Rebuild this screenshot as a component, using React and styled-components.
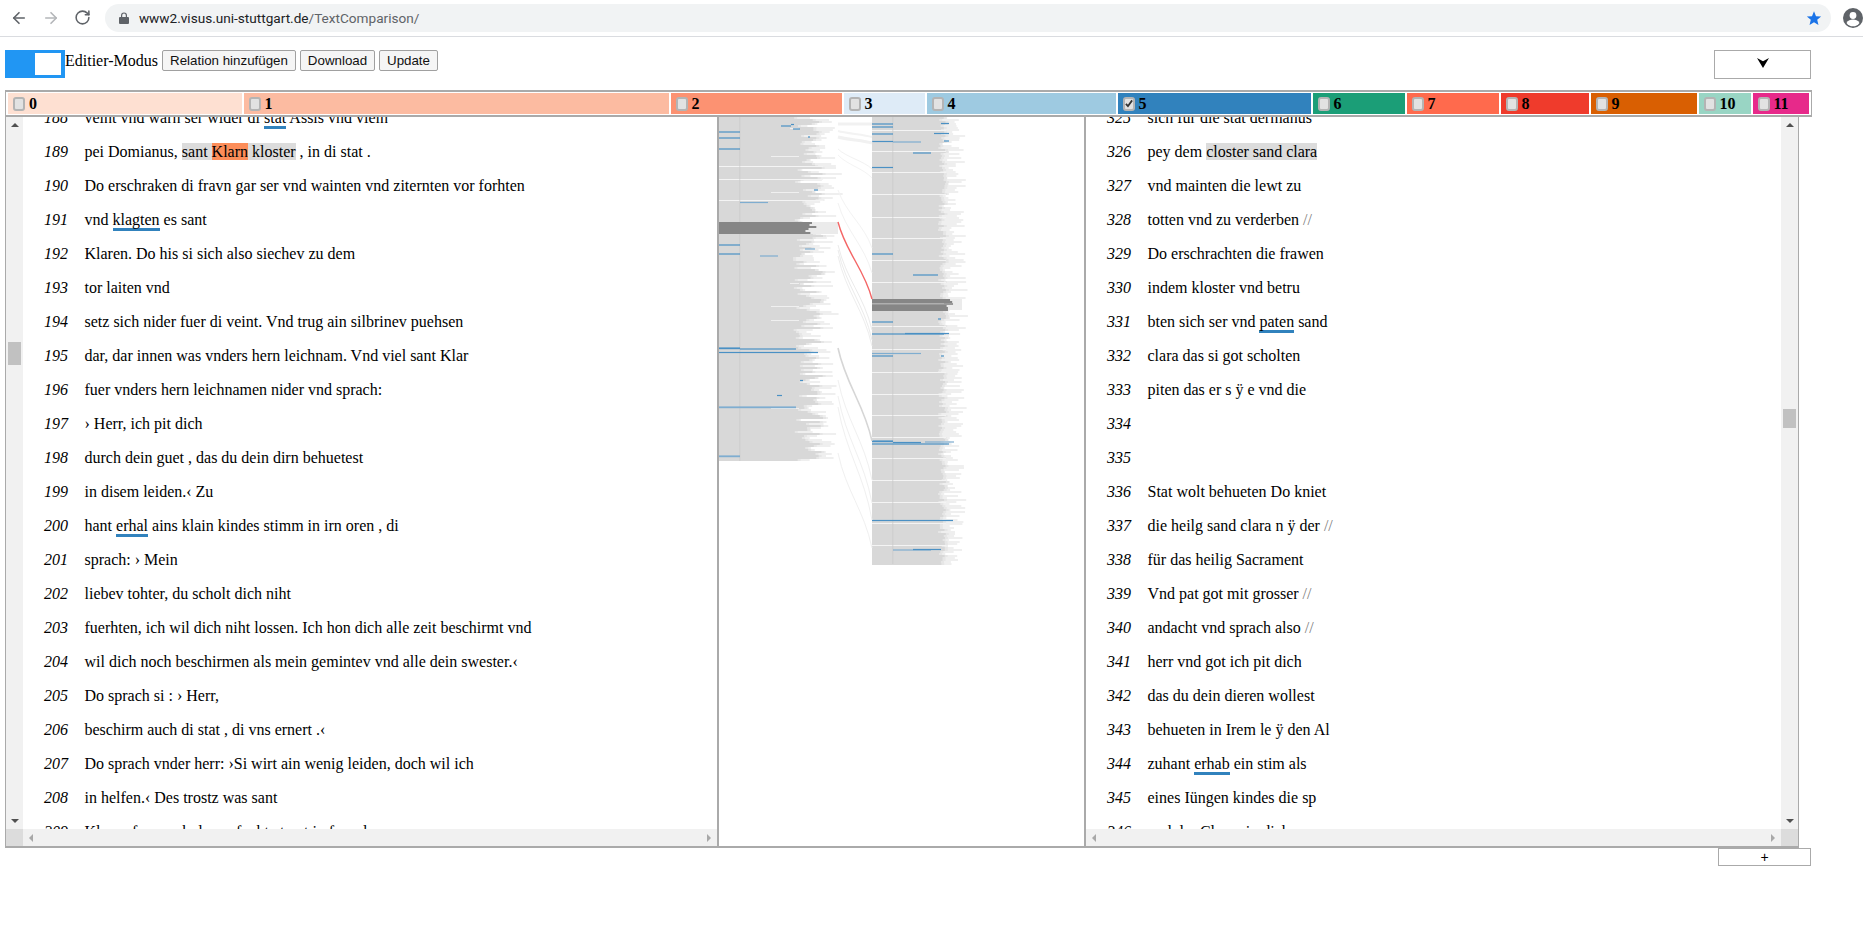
import React from "react";
import styled, { createGlobalStyle } from "styled-components";
import { ArrowLeft, ArrowRight, RotateCw } from "lucide-react";

const GlobalStyle = createGlobalStyle`
    html, body {
        margin: 0;
        padding: 0;
        background: #fff;
        overflow: hidden;
        font-family: "Liberation Serif", "Times New Roman", serif;
        font-size: 16px;
        color: #000;
    }
    * {
        box-sizing: border-box;
    }
`;

const Page = styled.div`
    width: 1863px;
    height: 928px;
    overflow: hidden;
`;

/* browser chrome */
const BrowserBar = styled.div`
    height: 37px;
    display: flex;
    align-items: center;
    border-bottom: 1px solid #dadce0;
    padding-left: 10px;
    padding-bottom: 1px;
`;

const NavIcon = styled.span`
    display: flex;
    width: 18px;
    height: 18px;
    margin-right: 14px;
    color: ${props => props.$dim ? "#b4b6b9" : "#5f6368"};
`;

const AddressBar = styled.div`
    margin-left: -1px;
    width: 1736px;
    height: 28px;
    border-radius: 14px;
    background: #f1f3f4;
    display: flex;
    align-items: center;
    padding-left: 14px;
    padding-right: 9px;
`;

const Url = styled.span`
    margin-left: 10px;
    font-family: Roboto, "Liberation Sans", sans-serif;
    font-size: 13.6px;
    color: #5f6368;
    flex: 1;
    b {
        font-weight: 400;
        color: #202124;
    }
`;

const Avatar = styled.svg`
    margin-left: 12px;
    flex: none;
`;

/* toolbar */
const Toolbar = styled.div`
    height: 53px;
    padding: 13px 52px 0 5px;
    display: flex;
    align-items: flex-start;
`;

const Toggle = styled.div`
    width: 60px;
    height: 28px;
    background: #2196f3;
    display: flex;
    justify-content: flex-end;
    padding: 3px 4px;
`;

const Knob = styled.div`
    width: 26px;
    height: 22px;
    background: #fff;
`;

const ModeLabel = styled.span`
    line-height: 21px;
    margin-right: 4px;
`;

const ToolButton = styled.button`
    height: 21px;
    width: ${props => props.$w}px;
    margin-right: 4px;
    padding: 0;
    background: #f5f5f5;
    border: 1px solid #a0a0a0;
    border-radius: 2px;
    font-family: "Liberation Sans", Arial, sans-serif;
    font-size: 13.33px;
    color: #111;
`;

const SelectBox = styled.div`
    margin-left: auto;
    width: 97px;
    height: 29px;
    border: 1px solid #aaa;
    display: flex;
    align-items: center;
    justify-content: center;
    padding-bottom: 3px;
`;

/* color tabs */
const TabBar = styled.div`
    margin-left: 5px;
    width: 1807px;
    height: 27px;
    border: 1px solid #aaa;
    border-top-width: 2px;
    border-bottom-width: 2px;
    padding: 1px 2px 0;
    display: flex;
    gap: 2px;
`;

const Tab = styled.div`
    flex: none;
    width: ${props => props.$w}px;
    height: 21px;
    background: ${props => props.$color};
    display: flex;
    align-items: center;
    padding-left: 5px;
    font-weight: 700;
    line-height: 21px;
`;

const Check = styled.span`
    flex: none;
    width: 12px;
    height: 14px;
    margin-right: 4px;
    background: #e2e2e2;
    border: 2px solid #b4b4b4;
    border-radius: 3px;
    display: flex;
    align-items: center;
    justify-content: center;
`;

/* main panes */
const Main = styled.div`
    margin-left: 5px;
    width: 1794px;
    height: 731px;
    border: 1px solid #aaa;
    border-top: 0;
    border-bottom-width: 2px;
    display: grid;
    grid-template-columns: 713px 365px 714px;
`;

const Pane = styled.div`
    height: 729px;
    display: grid;
    grid-template-columns: ${props => props.$side === "left" ? "17px 1fr" : "1fr 17px"};
    grid-template-rows: 712px 17px;
    border-${props => props.$side === "left" ? "right" : "left"}: 2px solid #aaa;
`;

const TextClip = styled.div`
    overflow: hidden;
    grid-row: 1;
    grid-column: ${props => props.$side === "left" ? 2 : 1};
`;

const Lines = styled.div`
    margin-top: -16px;
    padding-left: 21px;
`;

const Row = styled.div`
    height: 34px;
    line-height: 34px;
    display: flex;
    white-space: pre;
`;

const LineNo = styled.i`
    flex: none;
    width: 40.5px;
`;

const Mark = styled.span`
    background: ${props => props.$bg};
`;

const Under = styled.span`
    border-bottom: 3px solid #3182bd;
`;

const Slashes = styled.span`
    color: #808080;
`;

const VBar = styled.div`
    grid-row: 1;
    grid-column: ${props => props.$side === "left" ? 1 : 2};
    background: #f1f1f1;
    display: flex;
    flex-direction: column;
    align-items: center;
    padding: 6px 0;
`;

const Thumb = styled.div`
    width: 13px;
    height: ${props => props.$h}px;
    background: #c1c1c1;
    margin-top: ${props => props.$top}px;
    margin-bottom: auto;
`;

const Arrow = styled.span`
    width: 0;
    height: 0;
    border-left: 4px solid transparent;
    border-right: 4px solid transparent;
    border-${props => props.$dir === "up" ? "bottom" : "top"}: 4px solid #505050;
`;

const HBar = styled.div`
    grid-row: 2;
    grid-column: 1 / 3;
    background: #f1f1f1;
    display: flex;
    align-items: center;
    flex-direction: ${props => props.$side === "left" ? "row" : "row-reverse"};
`;

const Corner = styled.div`
    width: 17px;
    height: 17px;
    flex: none;
    background: #dcdcdc;
`;

const HArrows = styled.div`
    flex: 1;
    display: flex;
    justify-content: space-between;
    padding: 0 6px;
`;

const HArrow = styled.span`
    width: 0;
    height: 0;
    border-top: 4px solid transparent;
    border-bottom: 4px solid transparent;
    border-${props => props.$dir === "left" ? "right" : "left"}: 4px solid #a8a8a8;
`;

const Middle = styled.div`
    height: 729px;
    overflow: hidden;
`;

const Footer = styled.div`
    display: flex;
    justify-content: flex-end;
    padding-right: 52px;
`;

const AddButton = styled.div`
    width: 93px;
    height: 18px;
    border: 1px solid #aaa;
    text-align: center;
    line-height: 16px;
    font-family: "Liberation Sans", Arial, sans-serif;
    font-size: 14px;
`;

const tabs = [
    ["0", 233.5, "#fee0d2"], ["1", 425, "#fcbba1"], ["2", 171, "#fc9272"], ["3", 81, "#deebf7"],
    ["4", 189, "#9ecae1"], ["5", 193, "#3182bd", true], ["6", 92, "#1b9e77"], ["7", 92, "#ff6a4d"],
    ["8", 88, "#ef3b2c"], ["9", 106, "#d95f02"], ["10", 52, "#99d5c4"], ["11", 56, "#e7298a"],
];

const G = t => ({ t, k: "grey" });
const O = t => ({ t, k: "orange" });
const U = t => ({ t, k: "under" });
const S = { t: "//", k: "slash" };

const leftLines = [
    ["veint vnd warn ser wider di ", U("stat"), " Assis vnd vieln"],
    ["pei Domianus, ", G("sant "), O("Klarn"), G(" kloster"), " , in di stat ."],
    ["Do erschraken di fravn gar ser vnd wainten vnd ziternten vor forhten"],
    ["vnd ", U("klagten"), " es sant"],
    ["Klaren. Do his si sich also siechev zu dem"],
    ["tor laiten vnd"],
    ["setz sich nider fuer di veint. Vnd trug ain silbrinev puehsen"],
    ["dar, dar innen was vnders hern leichnam. Vnd viel sant Klar"],
    ["fuer vnders hern leichnamen nider vnd sprach:"],
    ["› Herr, ich pit dich"],
    ["durch dein guet , das du dein dirn behuetest"],
    ["in disem leiden.‹ Zu"],
    ["hant ", U("erhal"), " ains klain kindes stimm in irn oren , di"],
    ["sprach: › Mein"],
    ["liebev tohter, du scholt dich niht"],
    ["fuerhten, ich wil dich niht lossen. Ich hon dich alle zeit beschirmt vnd"],
    ["wil dich noch beschirmen als mein gemintev vnd alle dein swester.‹"],
    ["Do sprach si : › Herr,"],
    ["beschirm auch di stat , di vns ernert .‹"],
    ["Do sprach vnder herr: ›Si wirt ain wenig leiden, doch wil ich"],
    ["in helfen.‹ Des trostz was sant"],
    ["Klaren fuer sach das er fuchte trost in fremder"],
];

const rightLines = [
    ["sich für die stat dermanus"],
    ["pey dem ", G("closter sand clara")],
    ["vnd mainten die lewt zu"],
    ["totten vnd zu verderben ", S],
    ["Do erschrachten die frawen"],
    ["indem kloster vnd betru"],
    ["bten sich ser vnd ", U("paten"), " sand"],
    ["clara das si got scholten"],
    ["piten das er s ÿ e vnd die"],
    [""],
    [""],
    ["Stat wolt behueten Do kniet"],
    ["die heilg sand clara n ÿ der ", S],
    ["für das heilig Sacrament"],
    ["Vnd pat got mit grosser ", S],
    ["andacht vnd sprach also ", S],
    ["herr vnd got ich pit dich"],
    ["das du dein dieren wollest"],
    ["behueten in Irem le ÿ den Al"],
    ["zuhant ", U("erhab"), " ein stim als"],
    ["eines Iüngen kindes die sp"],
    ["vnd der Clara ain dich"],
];

const renderPart = (part, i) => {
    if (typeof part === "string") return part;
    if (part.k === "grey") return <Mark key={i} $bg="#dcdcdc">{part.t}</Mark>;
    if (part.k === "orange") return <Mark key={i} $bg="#fc8d59">{part.t}</Mark>;
    if (part.k === "under") return <Under key={i}>{part.t}</Under>;
    return <Slashes key={i}>{part.t}</Slashes>;
};

const TextPane = ({ side, lines, first, thumbTop, thumbHeight }) => (
    <Pane $side={side}>
        <VBar $side={side}>
            <Arrow $dir="up" />
            <Thumb $top={thumbTop} $h={thumbHeight} />
            <Arrow $dir="down" />
        </VBar>
        <TextClip $side={side}>
            <Lines>
                {lines.map((parts, i) => (
                    <Row key={i}>
                        <LineNo>{first + i}</LineNo>
                        <span>{parts.map(renderPart)}</span>
                    </Row>
                ))}
            </Lines>
        </TextClip>
        <HBar $side={side}>
            <Corner />
            <HArrows>
                <HArrow $dir="left" />
                <HArrow $dir="right" />
            </HArrows>
        </HBar>
    </Pane>
);

// small seeded random so the minimap comes out the same each run
const seeded = seed => () => {
    seed = (seed * 16807) % 2147483647;
    return (seed - 1) / 2147483646;
};

const buildColumn = ({ x, top, bottom, solid, core, spread, tail, seed, gaps, partial, dark }) => {
    const rnd = seeded(seed);
    const out = [];
    for (let y = top; y < bottom; y += 2) {
        const c = core + rnd() * spread;
        const t = c + rnd() * tail + 3;
        out.push(<rect key={"t" + y} x={x} y={y} width={t} height={2} fill="#efefef" />);
        out.push(<rect key={"m" + y} x={x} y={y} width={c + 3} height={2} fill="#e6e6e6" />);
        out.push(<rect key={"c" + y} x={x} y={y} width={c} height={2} fill="#d8d8d8" />);
    }
    // the bulk of every line reaches at least this far
    out.push(<rect key="solid" x={x} y={top} width={solid} height={bottom - top} fill="#d8d8d8" />);
    gaps.forEach(y => out.push(<rect key={"g" + y} x={x} y={y} width={core + spread} height={1} fill="#f4f4f4" />));
    partial.forEach(([y, from]) => out.push(<rect key={"p" + y} x={from} y={y} width={x + core - from + 6} height={1} fill="#f0f0f0" />));
    out.push(<rect key="v1" x={x + 20.5} y={top} width={0.7} height={bottom - top} fill="#c8c8c8" />);
    // highlighted segment, dark bar over a pale band
    out.push(<rect key="db" x={dark.x} y={dark.y} width={dark.bandW} height={dark.h} fill="#ebebeb" />);
    for (let y = dark.y; y < dark.y + dark.h; y += 2) {
        out.push(<rect key={"d" + y} x={x} y={y} width={dark.w + rnd() * 13} height={2} fill={rnd() > 0.8 ? "#9a9a9a" : "#868686"} />);
    }
    return out;
};

const leftBlue = [
    [719, 740, 132, 1], [719, 740, 138, 1], [719, 740, 149, 1], [781, 791, 126, 1], [791, 794, 124.5, 1],
    [793, 800, 129, 1], [808, 810, 137, 1], [814, 818, 190, 1], [740, 768, 202.5, 0], [719, 740, 245, 1],
    [719, 740, 254, 1], [760, 778, 256, 0], [805, 815, 249, 0], [719, 740, 348, 2], [740, 796, 349, 1],
    [719, 818, 352.5, 1.5], [800, 803, 380.5, 1], [777, 782, 395.5, 1], [719, 796, 407, 2, 1], [719, 740, 456, 2, 1],
];

const rightBlue = [
    [872, 893, 124, 1], [872, 893, 127, 1], [872, 893, 134, 1], [872, 893, 141.5, 1], [893, 921, 142, 0],
    [913, 931, 153, 1], [941, 949, 123.5, 1], [934, 949, 133.5, 1], [944, 949, 141, 1], [872, 893, 167.5, 1],
    [872, 893, 254, 1], [913, 938, 275, 1], [938, 941, 319, 1], [872, 893, 322, 1], [872, 944, 334, 1],
    [905, 949, 333.5, 1], [872, 921, 353.5, 0], [872, 893, 356, 1], [941, 944, 356, 1], [872, 893, 441, 2],
    [893, 921, 442.5, 1], [872, 949, 444, 1], [925, 954, 442, 0], [872, 953, 520.5, 1.5], [893, 931, 550, 0],
    [913, 941, 549.5, 1],
];

const links = [
    [124, 124, "#f1f1f1", 3], [137, 143, "#f1f1f1", 3], [131, 137, "#f3f3f3", 2], [149, 169, "#f2f2f2", 1],
    [155, 178, "#f4f4f4", 1], [190, 248, "#f3f3f3", 1], [203, 273, "#f2f2f2", 1], [245, 330, "#ebebeb", 1],
    [250, 340, "#ebebeb", 1], [256, 346, "#ededed", 1], [348, 441, "#d6d6d6", 1.6], [380, 480, "#f0f0f0", 1],
    [396, 503, "#f0f0f0", 1], [407, 520, "#f0f0f0", 1], [453, 548, "#f0f0f0", 1],
];

const linkPath = (y0, y1) => {
    const d = (y1 - y0) * 0.4;
    return `M838 ${y0} C846 ${y0 + d} 864 ${y1 - d} 872 ${y1}`;
};

const Minimap = () => (
    <svg width="365" height="729" viewBox="719 117 365 729">
        {buildColumn({
            x: 719, top: 117, bottom: 461, solid: 72, core: 74, spread: 30, tail: 19, seed: 4711,
            gaps: [166, 200, 179],
            partial: [[156, 771], [128, 790], [192, 771], [306, 771], [283, 790], [320, 771], [408, 771]],
            dark: { x: 719, y: 222, h: 12, w: 86, bandW: 119 },
        })}
        {buildColumn({
            x: 872, top: 117, bottom: 564, solid: 66, core: 66, spread: 8, tail: 20, seed: 90210,
            gaps: [130, 151, 172, 194, 217, 238, 260, 282, 326, 349, 372, 394, 415, 437, 458, 480, 502, 523, 545],
            partial: [],
            dark: { x: 944, y: 299, h: 11, w: 72, bandW: 18 },
        })}
        <rect x="872" y="303" width="72" height="0.8" fill="#b4b4b4" />
        {[...leftBlue, ...rightBlue].map(([a, b, y, weight, light], i) => (
            <rect
                key={i}
                x={a}
                y={y - 0.6}
                width={b - a}
                height={weight === 2 ? 1.8 : 1.2}
                fill={weight === 0 || light ? "#7fadd0" : "#4a90c4"}
            />
        ))}
        {links.map(([a, b, color, w], i) => (
            <path key={i} d={linkPath(a, b)} fill="none" stroke={color} strokeWidth={w} />
        ))}
        <path d={linkPath(222, 299)} fill="none" stroke="#f46666" strokeWidth="1.4" />
    </svg>
);

export default function App() {
    return (
        <Page>
            <GlobalStyle />
            <BrowserBar>
                <NavIcon><ArrowLeft size={18} strokeWidth={2.2} /></NavIcon>
                <NavIcon $dim><ArrowRight size={18} strokeWidth={2.2} /></NavIcon>
                <NavIcon><RotateCw size={17} strokeWidth={2.2} /></NavIcon>
                <AddressBar>
                    <svg width="10" height="12" viewBox="0 0 10 12">
                        <path d="M1 5h8a1 1 0 0 1 1 1v5a1 1 0 0 1-1 1H1a1 1 0 0 1-1-1V6a1 1 0 0 1 1-1zM2 5V3.4a3 3 0 0 1 6 0V5H6.8V3.4a1.8 1.8 0 0 0-3.6 0V5z" fill="#5f6368" />
                    </svg>
                    <Url><b>www2.visus.uni-stuttgart.de</b>/TextComparison/</Url>
                    <svg width="16" height="16" viewBox="0 0 24 24">
                        <path d="M12 2l3 7.2 7.7.6-5.9 5 1.9 7.6L12 18.3l-6.7 4.1 1.9-7.6-5.9-5 7.7-.6z" fill="#1a73e8" />
                    </svg>
                </AddressBar>
                <Avatar width="20" height="20" viewBox="0 0 20 20">
                    <circle cx="10" cy="10" r="10" fill="#5f6368" />
                    <circle cx="10" cy="7.5" r="3.4" fill="#fff" />
                    <path d="M3.5 15c1.4-2.4 4-3.4 6.5-3.4s5.100 1 6.500 3.400a8 8 0 0 1-13 0z" fill="#fff" />
                </Avatar>
            </BrowserBar>
            <Toolbar>
                <Toggle><Knob /></Toggle>
                <ModeLabel>Editier-Modus</ModeLabel>
                <ToolButton $w={134}>Relation hinzufügen</ToolButton>
                <ToolButton $w={75}>Download</ToolButton>
                <ToolButton $w={59}>Update</ToolButton>
                <SelectBox>
                    <svg width="12" height="10" viewBox="0 0 12 10">
                        <path d="M0 0L6 3.200L12 0L6 10z" fill="#000" />
                    </svg>
                </SelectBox>
            </Toolbar>
            <TabBar>
                {tabs.map(([label, w, color, checked]) => (
                    <Tab key={label} $w={w} $color={color}>
                        <Check>
                            {checked && (
                                <svg width="9" height="9" viewBox="0 0 9 9">
                                    <path d="M1 5l2.300 2.500L8 1" fill="none" stroke="#333" strokeWidth="2" />
                                </svg>
                            )}
                        </Check>
                        {label}
                    </Tab>
                ))}
            </TabBar>
            <Main>
                <TextPane side="left" lines={leftLines} first={188} thumbTop={215} thumbHeight={23} />
                <Middle><Minimap /></Middle>
                <TextPane side="right" lines={rightLines} first={325} thumbTop={282} thumbHeight={19} />
            </Main>
            <Footer>
                <AddButton>+</AddButton>
            </Footer>
        </Page>
    );
}
